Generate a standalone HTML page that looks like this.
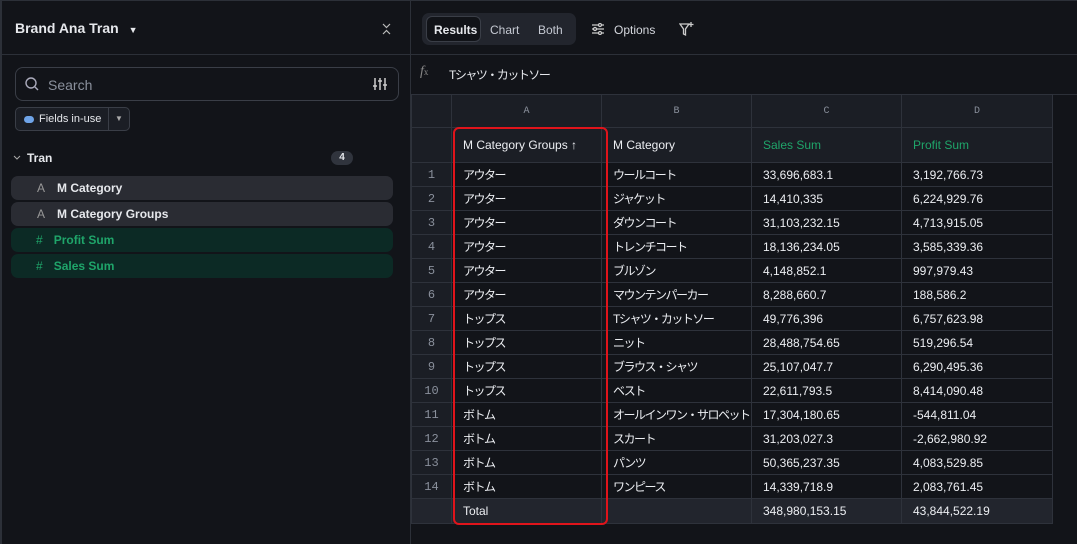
<!DOCTYPE html><html><head><meta charset="utf-8"><style>
*{box-sizing:border-box;margin:0;padding:0}
body{width:1077px;height:544px;background:#121419;color:#e6e8ec;font-family:"Liberation Sans","Noto Sans CJK JP",sans-serif;font-size:12px;position:relative;overflow:hidden}
.abs{position:absolute}
.side{left:0;top:0;width:411px;height:544px;border-right:1px solid #2c3038;border-top:1px solid #2c3038;border-left:2px solid #2c3038}
.hline{height:1px;background:#2c3038}
.field{position:absolute;left:11px;width:382px;height:24px;border-radius:7px;font-weight:bold;font-size:12px;line-height:24px}
.grid{position:absolute;left:411px;top:94px;width:641px;border-collapse:collapse;table-layout:fixed}
.grid td{border:1px solid #2e323b;height:24px;padding:0 11px;white-space:nowrap;overflow:hidden;font-size:12px;color:#eceef2}
.jp{letter-spacing:-1.5px}
.grid td.n{background:#1b1e25;color:#8a909c;text-align:center;padding:0;font-family:"Liberation Mono",monospace}
.grid tr.let td{height:33px;background:#1b1e25;color:#8a909c;text-align:center;font-size:10px;font-family:"Liberation Mono",monospace}
.grid tr.hd td{height:35px;background:#1b1e25}
.grid tr.tot td{height:25px;background:#22252d}
.g{color:#1fa56a!important}
</style></head><body>
<div class="abs side"></div>
<div class="abs" style="left:15px;top:20px;font-weight:bold;font-size:14px">Brand Ana Tran <span style="font-size:9px;margin-left:6px">▼</span></div>
<svg class="abs" style="left:382px;top:23px" width="9" height="12" viewBox="0 0 9 12" stroke="#bbb" stroke-width="1.2" fill="none"><path d="M1 1l3.5 3.5L8 1M1 11l3.5-3.5L8 11"/></svg>
<div class="abs hline" style="left:2px;top:54px;width:409px"></div>
<div class="abs" style="left:15px;top:67px;width:384px;height:34px;border:1px solid #3a3e47;border-radius:8px"></div>
<svg class="abs" style="left:25px;top:77px" width="14" height="14" viewBox="0 0 14 14"><circle cx="6" cy="6" r="5" fill="none" stroke="#aab" stroke-width="1.4"/><path d="M10 10l3 3" stroke="#aab" stroke-width="1.4"/></svg>
<div class="abs" style="left:48px;top:77px;font-size:14px;color:#8a909c">Search</div>
<svg class="abs" style="left:373px;top:77px" width="14" height="14" viewBox="0 0 14 14" stroke="#ccc" stroke-width="1.5"><path d="M2 1v12M7 1v12M12 1v12"/><path d="M0 9h4M5 4h4M10 8h4"/></svg>
<div class="abs" style="left:15px;top:107px;width:115px;height:24px;border:1px solid #3a3e47;border-radius:5px;background:#1b1e25"></div>
<div class="abs" style="left:108px;top:108px;width:1px;height:22px;background:#3a3e47"></div>
<div class="abs" style="left:24px;top:116px;width:10px;height:7px;border-radius:4px;background:#6fa4e8"></div>
<div class="abs" style="left:39px;top:113px;font-size:11px">Fields in-use</div>
<div class="abs" style="left:115px;top:114px;font-size:8px;color:#aaa">▼</div>
<svg class="abs" style="left:13px;top:155px" width="8" height="6" viewBox="0 0 8 6" stroke="#aaa" fill="none"><path d="M1 1l3 3 3-3"/></svg>
<div class="abs" style="left:27px;top:151px;font-weight:bold;font-size:12px">Tran</div>
<div class="abs" style="left:331px;top:151px;width:22px;height:14px;border-radius:7px;background:#30343d;font-size:10px;text-align:center;line-height:14px;font-weight:bold">4</div>
<div class="field" style="top:176px;background:#2a2c33"><span style="color:#999;font-weight:normal;margin:0 12px 0 26px">A</span>M Category</div>
<div class="field" style="top:202px;background:#2a2c33"><span style="color:#999;font-weight:normal;margin:0 12px 0 26px">A</span>M Category Groups</div>
<div class="field" style="top:228px;background:#0c2a25;color:#1fa56a"><span style="font-weight:normal;margin:0 11px 0 25px">#</span>Profit Sum</div>
<div class="field" style="top:254px;background:#0c2a25;color:#1fa56a"><span style="font-weight:normal;margin:0 11px 0 25px">#</span>Sales Sum</div>
<div class="abs hline" style="left:411px;top:0;width:666px"></div>
<div class="abs" style="left:422px;top:13px;width:154px;height:32px;border-radius:7px;background:#22252d"></div>
<div class="abs" style="left:426px;top:16px;width:55px;height:26px;border-radius:6px;background:#111318;border:1px solid #3a3e47"></div>
<div class="abs" style="left:434px;top:23px;font-weight:bold">Results</div>
<div class="abs" style="left:490px;top:23px;color:#c5c9d2">Chart</div>
<div class="abs" style="left:538px;top:23px;color:#c5c9d2">Both</div>
<svg class="abs" style="left:591px;top:23px" width="14" height="12" viewBox="0 0 14 12" stroke="#ccc" stroke-width="1.3" fill="none"><path d="M1 2h12M1 6h12M1 10h12"/><circle cx="9" cy="2" r="1.5" fill="#121419"/><circle cx="4" cy="6" r="1.5" fill="#121419"/><circle cx="9" cy="10" r="1.5" fill="#121419"/></svg>
<div class="abs" style="left:614px;top:23px;color:#d5d8de">Options</div>
<svg class="abs" style="left:679px;top:21px" width="15" height="16" viewBox="0 0 15 16" stroke="#ccc" stroke-width="1.3" fill="none"><path d="M1 3h9l-3.5 5v6l-2-1v-5z"/><path d="M12 1v5M9.5 3.5h5"/></svg>
<div class="abs hline" style="left:411px;top:54px;width:666px"></div>
<div class="abs" style="left:420px;top:64px;font-style:italic;color:#888;font-family:'Liberation Serif',serif;font-size:14px">f<span style="font-size:9px;font-style:normal">x</span></div>
<div class="abs jp" style="left:449px;top:66px;font-size:12px">Tシャツ・カットソー</div>
<div class="abs hline" style="left:411px;top:94px;width:666px"></div>
<table class="grid">
<colgroup><col style="width:40px"><col style="width:150px"><col style="width:150px"><col style="width:150px"><col style="width:151px"></colgroup>
<tr class="let"><td class="n"></td><td>A</td><td>B</td><td>C</td><td>D</td></tr>
<tr class="hd"><td class="n"></td><td>M Category Groups ↑</td><td>M Category</td><td class="g">Sales Sum</td><td class="g">Profit Sum</td></tr>
<tr><td class="n">1</td><td class="jp">アウター</td><td class="jp">ウールコート</td><td>33,696,683.1</td><td>3,192,766.73</td></tr>
<tr><td class="n">2</td><td class="jp">アウター</td><td class="jp">ジャケット</td><td>14,410,335</td><td>6,224,929.76</td></tr>
<tr><td class="n">3</td><td class="jp">アウター</td><td class="jp">ダウンコート</td><td>31,103,232.15</td><td>4,713,915.05</td></tr>
<tr><td class="n">4</td><td class="jp">アウター</td><td class="jp">トレンチコート</td><td>18,136,234.05</td><td>3,585,339.36</td></tr>
<tr><td class="n">5</td><td class="jp">アウター</td><td class="jp">ブルゾン</td><td>4,148,852.1</td><td>997,979.43</td></tr>
<tr><td class="n">6</td><td class="jp">アウター</td><td class="jp">マウンテンパーカー</td><td>8,288,660.7</td><td>188,586.2</td></tr>
<tr><td class="n">7</td><td class="jp">トップス</td><td class="jp">Tシャツ・カットソー</td><td>49,776,396</td><td>6,757,623.98</td></tr>
<tr><td class="n">8</td><td class="jp">トップス</td><td class="jp">ニット</td><td>28,488,754.65</td><td>519,296.54</td></tr>
<tr><td class="n">9</td><td class="jp">トップス</td><td class="jp">ブラウス・シャツ</td><td>25,107,047.7</td><td>6,290,495.36</td></tr>
<tr><td class="n">10</td><td class="jp">トップス</td><td class="jp">ベスト</td><td>22,611,793.5</td><td>8,414,090.48</td></tr>
<tr><td class="n">11</td><td class="jp">ボトム</td><td class="jp">オールインワン・サロペット</td><td>17,304,180.65</td><td>-544,811.04</td></tr>
<tr><td class="n">12</td><td class="jp">ボトム</td><td class="jp">スカート</td><td>31,203,027.3</td><td>-2,662,980.92</td></tr>
<tr><td class="n">13</td><td class="jp">ボトム</td><td class="jp">パンツ</td><td>50,365,237.35</td><td>4,083,529.85</td></tr>
<tr><td class="n">14</td><td class="jp">ボトム</td><td class="jp">ワンピース</td><td>14,339,718.9</td><td>2,083,761.45</td></tr>
<tr class="tot"><td class="n"></td><td>Total</td><td></td><td>348,980,153.15</td><td>43,844,522.19</td></tr>
</table>
<div class="abs" style="left:453px;top:127px;width:155px;height:398px;border:2px solid #e0141b;border-radius:6px"></div>
</body></html>
